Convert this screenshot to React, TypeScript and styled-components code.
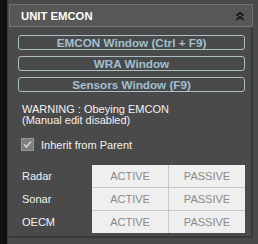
import React from 'react';
import styled, { createGlobalStyle } from 'styled-components';
import { ChevronsUp } from 'lucide-react';

const GlobalStyle = createGlobalStyle`
  html, body {
    margin: 0;
    padding: 0;
    background: #545454;
  }
  body {
    font-family: "Liberation Sans", Arial, sans-serif;
    font-size: 11px;
  }
`;

/* ─── Frame ─── */
const Screen = styled.div`
  display: flex;
  width: 258px;
  height: 244px;
  overflow: hidden;
`;

const DockEdge = styled.div`
  width: 10px;
  background: #0e1014;
  border-right: 1px solid #3a3a3a;
`;

const Dock = styled.div`
  flex: 1;
  display: flex;
  flex-direction: column;
  padding: 4px 5px 0 1px;
  background: #4a4a4a;
`;

const Panel = styled.section`
  display: flex;
  flex-direction: column;
  height: 234px;
  background: #4a4a4a;
  border-right: 2px solid #383838;
  border-bottom: 2px solid #383838;
  box-sizing: border-box;
`;

/* ─── Header ─── */
const Header = styled.div`
  display: flex;
  align-items: center;
  justify-content: space-between;
  height: 23px;
  margin-right: -2px;
  padding: 0 5px 0 11px;
  background: #575757;
  border: 1px solid #737373;
  box-sizing: border-box;
`;

const Title = styled.span`
  color: #ffffff;
  font-weight: 700;
  font-size: 11.3px;
`;

const Collapse = styled.span`
  display: flex;
  color: #141414;
`;

/* ─── Body ─── */
const Body = styled.div`
  display: flex;
  flex-direction: column;
  padding: 8px 6px 0 9px;
`;

const LinkButton = styled.button`
  height: 15px;
  padding: 0;
  margin: 0 0 6px;
  background: transparent;
  border: 1px solid #a9bfc4;
  border-radius: 3px;
  color: #a0c0d0;
  font-family: "Liberation Sans", Arial, sans-serif;
  font-weight: 700;
  font-size: 11.7px;
  line-height: 13px;
  box-sizing: border-box;
`;

const Warning = styled.p`
  margin: 6px 0 0 4px;
  color: #f2f2f2;
  font-size: 11px;
  line-height: 11px;
`;

const CheckRow = styled.label`
  display: flex;
  align-items: center;
  gap: 7px;
  margin: 12px 0 0 3px;
  color: #f2f2f2;
  font-size: 11px;
`;

const CheckBox = styled.span`
  display: flex;
  align-items: center;
  justify-content: center;
  width: 13px;
  height: 13px;
  background: #7d7d7d;
  border: 1px solid #9a9a9a;
  box-sizing: border-box;
`;

/* ─── Sensor state grid ─── */
const States = styled.div`
  display: flex;
  margin: 14px 0 0 4px;
`;

const Labels = styled.div`
  display: flex;
  flex-direction: column;
  gap: 1px;
  width: 70px;
`;

const Label = styled.span`
  height: 22px;
  line-height: 22px;
  color: #f2f2f2;
  font-size: 11px;
`;

const Switches = styled.div`
  display: grid;
  grid-template-columns: 76px 76px;
  grid-auto-rows: 22px;
  gap: 1px;
  background: #c9c9c9;
`;

const Switch = styled.div`
  display: flex;
  align-items: center;
  justify-content: center;
  background: #efefef;
  color: #8a8a8a;
  font-size: 11px;
`;

const sensors = ['Radar', 'Sonar', 'OECM'];

export default function App() {
  return (
    <>
      <GlobalStyle />
      <Screen>
        <DockEdge />
        <Dock>
          <Panel>
            <Header>
              <Title>UNIT EMCON</Title>
              <Collapse>
                <ChevronsUp size={14} strokeWidth={3} />
              </Collapse>
            </Header>
            <Body>
              <LinkButton>EMCON Window (Ctrl + F9)</LinkButton>
              <LinkButton>WRA Window</LinkButton>
              <LinkButton>Sensors Window (F9)</LinkButton>
              <Warning>
                WARNING : Obeying EMCON
                <br />
                (Manual edit disabled)
              </Warning>
              <CheckRow>
                <CheckBox>
                  <svg width="9" height="9" viewBox="0 0 9 9">
                    <path d="M1 4.5 L3.5 7 L8 1.5" fill="none" stroke="#d6d6d6" strokeWidth="1.6" />
                  </svg>
                </CheckBox>
                Inherit from Parent
              </CheckRow>
              <States>
                <Labels>
                  {sensors.map((s) => (
                    <Label key={s}>{s}</Label>
                  ))}
                </Labels>
                <Switches>
                  {sensors.map((s) => (
                    <React.Fragment key={s}>
                      <Switch>ACTIVE</Switch>
                      <Switch>PASSIVE</Switch>
                    </React.Fragment>
                  ))}
                </Switches>
              </States>
            </Body>
          </Panel>
        </Dock>
      </Screen>
    </>
  );
}
